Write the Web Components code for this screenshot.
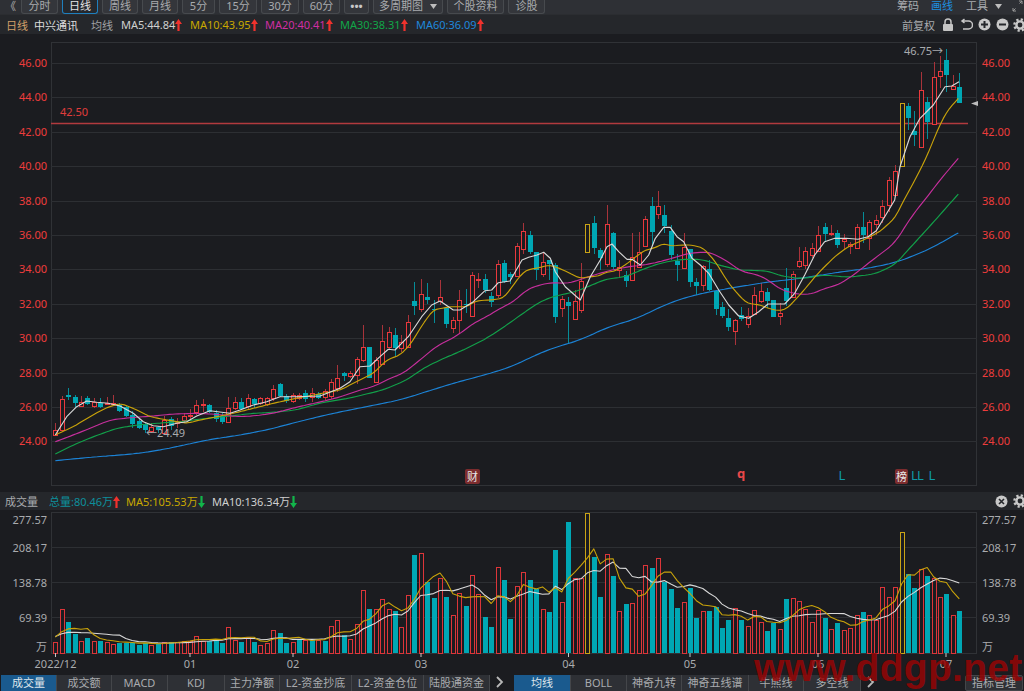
<!DOCTYPE html>
<html><head><meta charset="utf-8"><style>
html,body{margin:0;padding:0;background:#1c1d21;overflow:hidden}
body{width:1024px;height:691px;font:11px "Noto Sans","Noto Sans CJK SC",sans-serif;color:#c4c4c4}
</style></head><body>
<app-shell>
<app-toolbar></app-toolbar>
<quote-head></quote-head>
<kline-chart></kline-chart>
<vol-head></vol-head>
<vol-chart></vol-chart>
<tab-bar></tab-bar>
<water-mark>www.ddgp.net</water-mark>
</app-shell>
<script>
const FONT='"Noto Sans","Noto Sans CJK SC",sans-serif';
const X=i=>55.3+6.411*i;
const BG='#1b1c20',RED='#ea383c',TEAL='#00a7b4',YEL='#c9a316';
const UP='<svg width="7" height="12" viewBox="0 0 7 12" style="display:inline-block;vertical-align:-2px"><path d="M3.5 0L7 5H4.6V12H2.4V5H0Z" fill="#f0322d"/></svg>';
const DN='<svg width="7" height="12" viewBox="0 0 7 12" style="display:inline-block;vertical-align:-2px"><path d="M3.5 12L7 7H4.6V0H2.4V7H0Z" fill="#12b54a"/></svg>';
const GEAR=`<svg width="14" height="14" viewBox="0 0 14 14"><circle cx="7" cy="7" r="3.6" fill="none" stroke="#c8c8c8" stroke-width="2.4"/><circle cx="7" cy="7" r="5.6" fill="none" stroke="#c8c8c8" stroke-width="2.4" stroke-dasharray="2.2 2.2"/></svg>`;
const TRI='<svg width="7" height="5" viewBox="0 0 7 5"><path d="M0 0H7L3.5 5Z" fill="#bdbdbd"/></svg>';
const candleData=[
[380,`R 150 165 130 165
R 58 150 47 150
T 45 50 25 60
T 50 68 45 80
R 65 78 48 80
T 55 72 48 75
R 67 80 55 83
T 70 82 55 85
R 68 70 50 75
R 70 72 45 75
T 75 92 68 97
T 82 108 78 112
T 105 132 92 145
T 123 145 118 148
T 133 150 128 158
R 142 153 128 158
T 142 152 138 158
R 120 160 108 165
T 118 140 112 150
R 125 127 115 145
R 107 120 98 130
R 105 107 88 118
R 75 95 60 105
R 73 75 58 95
T 75 95 72 100
T 100 118 90 125
T 108 127 100 132
R 85 126 50 130
R 67 85 50 90
T 65 85 55 90
R 55 80 42 88
T 58 72 55 85
R 55 70 52 75
R 55 72 50 78
R 28 55 15 62
T 12 47 8 50
T 48 62 42 68
R 45 62 38 68
R 45 55 38 60
T 40 58 30 65
R 40 52 25 65
T 42 55 35 58
R 33 52 28 60
R 6 48 -3 58
R -5 24 -45 35`],
[260,`T 338 348 336 362
R 340 350 333 355
R 297 345 290 372
R 260 300 195 305
T 262 355 262 355
R 300 365 290 365
R 242 310 195 310
R 217 262 200 270
T 225 263 205 290
R 245 262 225 275
R 185 260 165 262
T 122 137 67 165
R 102 147 57 155
T 112 122 70 132
T 148 152 120 190
R 112 123 60 135
T 145 193 140 205
R 180 203 170 218
R 119 180 90 218
T 132 135 88 160
R 45 167 35 172
R 58 62 40 85
T 58 92 42 98
T 108 127 95 140
R 12 105 0 115
T 8 65 0 70
T 43 53 35 72`],
[180,`R 197 287 190 290
R 153 208 130 222
T 165 215 153 222
T 217 270 215 300
R 245 281 215 290
T 240 252 240 300
T 255 410 250 428
R 358 386 347 410
T 365 377 350 492
R 362 415 330 420
R 303 390 250 400
Y 131 214 131 214
T 130 204 108 222
T 210 235 205 270
R 133 254 75 262
T 158 260 155 268
R 260 268 240 293
T 285 302 272 320
R 230 299 158 300
R 216 262 157 265
R 118 198 108 200
T 78 155 52 197
R 78 101 33 118
T 105 137 75 158
T 152 223 135 240
T 242 253 222 303
R 202 266 158 268
T 207 305 207 320
T 305 317 295 345
R 259 315 255 333
T 268 332 240 332
T 332 387 330 405
T 380 408 365 413
T 413 441 388 452
R 421 455 418 495
T 405 418 380 423
R 407 430 385 443
R 345 401 322 405
R 333 364 310 368
T 335 362 325 385`],
[200,`T 300 350 300 352
R 340 350 310 375
T 265 303 205 318
R 222 290 212 292
R 184 198 142 203
R 154 196 142 208
R 145 165 130 175
R 106 155 77 157
T 82 104 70 122
R 98 102 75 108
T 100 137 90 144
R 117 123 102 150
R 133 138 125 162
R 82 145 72 145
T 82 106 35 130
R 65 112 60 150
R 60 73 45 105
R 17 50 0 70
R -60 15 -69 36`],
[40,`R 392 465 375 470
Y 188 376 188 376
T 197 233 190 270
T 272 284 212 318
R 150 322 97 322
T 185 245 170 298
R 110 250 67 253
R 92 108 48 143
T 61 105 28 155
R 138 147 105 148
T 142 190 100 190`]];
const candles=[];
candleData.forEach(([o,s])=>s.split('\n').forEach(l=>{const p=l.trim().split(' ');candles.push([p[0],...p.slice(1).map(v=>o+v/3)])}));
const MA=[
['#d8d8d8',0,`55.3,435 66.7,416.7 76.7,406.7 86.7,401 96.7,402.3 108.3,403.3 120,406 133.3,413.3 143.3,421.7 153.3,425.7 163.3,426.7 176.7,423.3 186.7,421.7 196.7,416 210,410.7 221.7,412.3 230,413.3 240,410 253.3,405 266.7,401.7 280,396.7 296,396.7 320,396 340,388.3 350,381.7 360,366.7 370,366 380,356.7 388.3,349.3 395,350 408.3,336.7 421.7,316.7 431.7,305 440,301 453.3,310 460,310 473.3,301.7 485,290.7 491.7,290 498.3,282.7 510,281 522,260 528.7,257.3 537,255 543.7,252.3 550.3,258.3 555.3,271.7 565.3,286.7 580.3,300 590.3,276.7 600.3,260 607,246.7 612,244 618.7,251.7 627,259.3 632,259.3 640.3,265 648.7,255 655.3,238.3 663.7,227.3 670.3,227.3 677,236.7 683.7,241.7 692,258.3 700.3,265 708.7,273.3 718.7,290 728.7,305 738.7,316 748.7,318.3 758.7,311.7 768,304 784.7,304 794.7,293.3 804.7,275 814.7,255 824.7,241.7 834.7,238.3 846.3,238.3 858,239.3 868,236.7 876.3,230.7 884.7,216.7 894.7,200 900,166.7 910,136.7 920,118.3 933.3,105 945,86.7 951.7,86 959,81.7`],
['#c9a30a',1,`55.3,435 73.3,426.7 90,416.7 105,408.3 120,403.3 133.3,408.3 150,416.7 166.7,420 186.7,423.3 200,420 216.7,416.7 233.3,413.3 253.3,408.3 273.3,403.3 296,398.3 340,390 350,385 363.3,378.3 373.3,373.3 386.7,360 400,355 410,345 423.3,323.3 433.3,310 450,306.7 466.7,306.7 476.7,300.7 490,300 503.3,298.3 512,287 522,273.3 528.7,269.3 537,268.3 548.7,265 557,267.3 568.7,272.7 580.3,278.3 590.3,276.7 598.7,276 607,271.7 613.7,271.7 625.3,265 633.7,258.3 645.3,250 653.7,248.3 664.3,243.3 670.3,246 682,245 692,245 703.7,248.3 715.3,261.7 728.7,283.3 738.7,295 747,303.3 760.3,305 768,308.3 778,310.7 786.3,309.3 801.3,293.3 818,273.3 834.7,256.7 848,246.7 864.7,239.3 879.7,231.7 894.7,218.3 904,200 915,180 926.7,156.7 938.3,128.3 946.7,111.7 958.3,98.3`],
['#c72f9d',2,`55.3,441.7 73.3,435 90,428.3 110,420 130,417.7 153.3,416 173.3,414 196.7,413.3 216.7,414.3 236.7,416.7 253.3,416 273.3,413.3 296,407.3 320,402 340,397 360,390 373.3,386.7 390,378.3 403.3,373.3 420,360 436.7,346 456.7,336 473.3,323.3 486.7,316.7 500,308.3 512,302.7 528.7,288.3 548.7,282.7 568.7,283.3 588.7,276.7 608.7,270.7 628.7,266.7 648.7,264.3 668.7,259.3 688.7,253.3 708.7,251.7 725.3,260 742,271.7 758.7,275 768,280 781.3,290 798,294.3 811.3,294.3 824.7,288.3 838,285 851.3,276.7 874.7,258.3 894.7,243.3 911.3,216.7 924.7,200 940,180 958.3,158.3`],
['#12a14a',2,`55.3,454 73.3,445 93.3,436.7 116.7,428.3 136.7,425 156.7,423.3 180,421.7 206.7,418.3 230,416 253.3,413.3 273.3,412.3 296,410 320,403 350,398 383,390 406.7,380 423.3,368.3 440,360 463.3,350 486.7,338.3 506.7,325 525.3,311.7 542,300.7 555.3,296 575.3,291.7 592,285 605.3,279.3 625.3,276.7 645.3,268.3 662,262.7 682,259.3 702,259.3 718.7,265 738.7,270 768,271 781.3,276 801.3,278.7 824.7,275 848,277.3 874.7,274 894.7,265 908,250 928,228.3 953,200 958.5,194`],
['#1c83d6',4,`55.3,460.7 90,457.3 133.3,454 156.7,450.7 180,446 206.7,440 240,435 266.7,430 296,422.3 330,414 360,408 400,400 431.7,390 453.3,383.3 486.7,374.3 510,367.3 525.3,360 548.7,349.3 580.3,340 608.7,326.7 635.3,319.3 655.3,309.3 675.3,300.7 698.7,294 728.7,288.3 768,282 801.3,278.3 831.3,273.3 868,268.3 896.3,262.3 913,256 931.3,248.3 958.7,232.7`]];
function smooth(str,w){
 const p=str.split(' ').map(s=>s.split(',').map(Number));
 if(!w)return str;
 const s=[];let j=0;
 for(let x=p[0][0];x<=p[p.length-1][0];x+=3){while(j<p.length-2&&p[j+1][0]<x)j++;const t=(x-p[j][0])/(p[j+1][0]-p[j][0]);s.push(p[j][1]+t*(p[j+1][1]-p[j][1]))}
 return s.map((_,i)=>{const r=Math.min(w,i,s.length-1-i);let a=0;for(let k=-r;k<=r;k++)a+=s[i+k];return (p[0][0]+3*i).toFixed(1)+','+(a/(2*r+1)).toFixed(1)}).join(' ');
}
class AppShell extends HTMLElement{constructor(){super();this.attachShadow({mode:'open'}).innerHTML=`<style>:host{display:flex;flex-direction:column;position:relative;width:1024px;height:691px;overflow:hidden}</style><slot></slot>`}}
class ToolBtn extends HTMLElement{constructor(){super();this.attachShadow({mode:'open'}).innerHTML=`<style>
:host{display:flex;flex:none;align-items:center;justify-content:center;box-sizing:border-box;height:14px;width:var(--w,37px);border:1px solid #474a4e;border-top:none;border-radius:0 0 3px 3px;background:#34363b;color:#a9abae;padding-bottom:1px;white-space:nowrap;line-height:12px}
:host([active]){border-color:#1f7fbd;background:#25282d;color:#e4e4e4}
</style><slot></slot>`}}
class AppToolbar extends HTMLElement{constructor(){super();
const b=[['分时',37],['日线',36,1],['周线',36],['月线',36],['5分',33],['15分',38],['30分',38],['60分',37],['<b style="color:#c8c8c8;letter-spacing:0">•••</b>',25],[`<span style="margin-right:7px">多周期图</span>${TRI}`,70],['个股资料',57],['诊股',37]];
this.attachShadow({mode:'open'}).innerHTML=`<style>
:host{display:flex;flex:none;height:15px;background:#2e3035;align-items:flex-start;box-sizing:border-box;font:11px/12px ${FONT};border-bottom:1px solid #2b2d31}
.bk{width:21px;flex:none;text-align:center;color:#b0b0b0;font-size:11px;box-sizing:border-box}
.btns{display:flex;gap:4px;align-items:flex-start}
.sp{flex:1}.r{display:flex;align-items:center;color:#a9abae;height:12px}
.r span{display:block}.r svg{display:block;flex:none}
</style><div class="bk">《</div><div class="btns">${b.map(x=>`<tool-btn style="--w:${x[1]}px" ${x[2]?'active':''}>${x[0]}</tool-btn>`).join('')}</div><div class="sp"></div>
<div class="r"><span style="margin-right:12px">筹码</span><span style="color:#1e8fe0;margin-right:13px">画线</span><span style="margin-right:7px">工具</span>${TRI.replace('<svg','<svg style="margin-right:10px"')}<svg width="11" height="12" viewBox="0 0 11 12" style="margin-right:1px"><path d="M7 1h3v3M10 1L7.5 3.5M4 11H1V8M1 11l2.5-2.5" fill="none" stroke="#9a9a9a"/></svg></div>`}}
class QuoteHead extends HTMLElement{constructor(){super();
const ma=[['MA5:44.84','#d0d0d0',69],['MA10:43.95','#c9a800',75],['MA20:40.41','#d02ea3',75],['MA30:38.31','#10a648',76],['MA60:36.09','#1f88dc',76]];
this.attachShadow({mode:'open'}).innerHTML=`<style>
:host{display:flex;flex:none;height:19px;background:#25272b;align-items:center;font:11px ${FONT};padding-left:6px;white-space:nowrap}
span{display:block}.m{flex:none}.sp{flex:1}.i{display:block;flex:none}
</style><span style="color:#d2a06a;width:28px">日线</span><span style="color:#dedede;width:57px">中兴通讯</span><span style="color:#a0a2a5;width:30px">均线</span>
${ma.map(m=>`<span class="m" style="color:${m[1]};width:${m[2]}px">${m[0]}${UP}</span>`).join('')}<div class="sp"></div>
<span style="color:#a9abae;margin-right:7px">前复权</span>
<svg class="i" width="12" height="14" viewBox="0 0 12 14" style="margin-right:6px"><path d="M3 6V4a3 3 0 0 1 6 0v2" fill="none" stroke="#c4c4c4" stroke-width="1.5"/><rect x="1" y="6" width="10" height="7" rx="1" fill="#c4c4c4"/></svg>
<svg class="i" width="13" height="13" viewBox="0 0 13 13" style="margin-right:5px"><path d="M3 3h5.5a3.5 3.5 0 0 1 0 8H3M4.5 1L2 3l2.5 2" fill="none" stroke="#c8c8c8" stroke-width="1.5"/></svg>
<svg class="i" width="13" height="13" viewBox="0 0 13 13" style="margin-right:5px"><circle cx="6.5" cy="6.5" r="6" fill="#c8c8c8"/><path d="M3 6.5h7M6.5 3v7" stroke="#25272b" stroke-width="2"/></svg>
<svg class="i" width="13" height="13" viewBox="0 0 13 13" style="margin-right:4px"><circle cx="6.5" cy="6.5" r="6" fill="#c8c8c8"/><path d="M3 6.5h7" stroke="#25272b" stroke-width="2"/></svg>
<div style="margin-right:-3px;display:flex">${GEAR}</div>`}}
class VolHead extends HTMLElement{constructor(){super();
this.attachShadow({mode:'open'}).innerHTML=`<style>
:host{display:flex;flex:none;height:18px;background:#25272b;align-items:center;font:11px ${FONT};padding-left:5px;white-space:nowrap}
span{display:block}.sp{flex:1}.i{display:block;flex:none}
</style><span style="color:#a9abae;width:44px">成交量</span><span style="color:#0d8f9c;width:77px">总量:80.46万${UP}</span><span style="color:#c9a800;width:86px">MA5:105.53万${DN}</span><span style="color:#d0d0d0">MA10:136.34万${DN}</span><div class="sp"></div>
<svg class="i" width="13" height="13" viewBox="0 0 13 13" style="margin-right:5px"><circle cx="6.5" cy="6.5" r="6" fill="#c8c8c8"/><path d="M4 4l5 5M9 4l-5 5" stroke="#25272b" stroke-width="1.6"/></svg>
<div style="margin-right:-3px;display:flex">${GEAR}</div>`}}
class KlineChart extends HTMLElement{constructor(){super();
let g='',tx='';
for(let p=46,k=0;p>=24;p-=2,k++){const y=Math.round(63+k*34.4)+.5;g+=`<path d="M51 ${y}H977" stroke="#2d2f33"/>`;
 const t=p.toFixed(2);tx+=`<text x="47" y="${y+3.5}" text-anchor="end">${t}</text><text x="982" y="${y+3.5}">${t}</text>`}
let c='';
const hy=v=>Math.round(v)+.5;
candles.forEach((d,i)=>{const x=Math.round(X(i))+.5,col=d[0]=='R'?RED:d[0]=='T'?TEAL:YEL,wc=d[0]=='R'?'#a8333a':'#058c98';
 if(d[0]!='Y')c+=`<path d="M${x} ${Math.round(d[3])}V${Math.round(d[4])}" stroke="${wc}"/>`;
 if(d[0]=='T')c+=`<rect x="${x-2.5}" y="${Math.round(d[1])}" width="5" height="${Math.max(Math.round(d[2]-d[1]),1)}" fill="${col}"/>`;
 else c+=`<rect x="${x-2}" y="${hy(d[1])}" width="4" height="${Math.max(Math.round(d[2]-d[1]),1)}" fill="${BG}" stroke="${col}"/>`});
const lines=MA.slice().reverse().map(([col,w,p])=>`<polyline points="${smooth(p,w)}" fill="none" stroke="${col}" stroke-width="1.15" stroke-linejoin="round"/>`).join('');
const badge=(x,w,t)=>`<rect x="${x}" y="469" width="${w}" height="15" rx="2" fill="#7c2c2e"/><text x="${x+w/2}" y="480.5" text-anchor="middle" fill="#e8e8e8">${t}</text>`;
this.attachShadow({mode:'open'}).innerHTML=`<style>:host{display:block;flex:none;height:458px;background:${BG}}svg{display:block;font:11px ${FONT}}</style>
<svg width="1024" height="458" viewBox="0 34 1024 458">
<rect x="0" y="34" width="1024" height="458" fill="${BG}"/>
<rect x="51.5" y="42.5" width="925" height="443" fill="none" stroke="#303236"/>
${g}
<g fill="#ee3c3c">${tx}</g>
<path d="M51 123.5H968" stroke="#b23a3e" stroke-width="1.3"/>
<text x="60" y="116" fill="#e03c3c">42.50</text>
${c}${lines}
<text x="904" y="55" fill="#a9abae">46.75→</text>
<text x="146" y="437" fill="#a9abae">←24.49</text>
<path d="M971 103.5L978 101V106Z" fill="#bdbdbd"/>
${badge(465,15,'财')}
<text x="741" y="478" text-anchor="middle" fill="#e8484a" font-weight="700" font-size="13">q</text>
<text x="842" y="480" text-anchor="middle" fill="#0e9aa8" font-size="13">L</text>
${badge(895,13,'榜')}
<text x="911" y="480" fill="#0e9aa8" font-size="13">L</text><text x="917" y="480" fill="#0e9aa8" font-size="13">L</text>
<text x="932" y="480" text-anchor="middle" fill="#0e9aa8" font-size="13">L</text>
</svg>`}}
const volZ=[395,298,337,372,392,384,392,392,395,403,398,398,398,405,400,405,403,395,395,395,393,392,377,392,393,387,398,350,390,397,380,397,405,398,360,370,400,395,390,390,387,390,392,347,329,375,388,343,239,298,296,266,298,304,352,256,136,129,215,265,205,260,316,250,288,195,253,321,351,172,211,326,
228,187,211,237,296,307,120,275,35,203,203,8,140,260,131,197,302,283,278,239,164,175,143,215,238,293,277,235,323,302,304,292,354,331,293,329,349,301,337,362,340,357,268,263,274,298,335,301,323,357,340,360,355,316,307,316,330,230,260,230,65,192,235,178,197,205,260,252,316,304];
const volT='RRTTRTRTRRTTTTTRTRTRRRRRTTTRRTRTRRRTTRTRTRTRRTRRRTRRRTRRTRTTRTRRTRRTTRTT'+'RRTTRTTRTRRYTTRTRTRRRTRTTTRTTRTTTTRTRRRTTRTRRRRRTRTRRRTRRRRRYTTRTRRTRT';
class VolChart extends HTMLElement{constructor(){super();
const ty=i=>510+i/3;let g='',tx='';
[[547.5,'208.17'],[582.5,'138.78'],[617.5,'69.39']].forEach(([y,t])=>{g+=`<path d="M51 ${y}H977" stroke="#2d2f33"/>`;tx+=`<text x="47" y="${y+4}" text-anchor="end">${t}</text><text x="982" y="${y+4}">${t}</text>`});
tx+=`<text x="47" y="524" text-anchor="end">277.57</text><text x="982" y="524">277.57</text><text x="47" y="651" text-anchor="end">万</text><text x="982" y="651">万</text>`;
let bars='';
volZ.forEach((z,i)=>{const x=Math.round(X(i))+.5,t=volT[i],y=ty(z);
 if(t=='T')bars+=`<rect x="${x-2.5}" y="${Math.round(y)}" width="5" height="${653-Math.round(y)}" fill="${TEAL}"/>`;
 else bars+=`<rect x="${x-2}" y="${Math.round(y)+.5}" width="4" height="${653-Math.round(y)}" fill="${BG}" stroke="${t=='R'?'#dc3539':YEL}"/>`});
const maLine=(n,col)=>{const v=volZ.map(z=>430-z);const pts=v.map((_,i)=>{let s=0;for(let k=0;k<n;k++)s+=i-k>=0?v[i-k]:51;return X(i).toFixed(1)+','+(653-s/n/3).toFixed(1)}).join(' ');
 return `<polyline points="${pts}" fill="none" stroke="${col}" stroke-width="1.1" stroke-linejoin="round"/>`};
const ticks=[[55.5,'2022/12'],[190,'01'],[293,'02'],[421,'03'],[568.5,'04'],[690,'05'],[818,'06'],[946,'07']];
this.attachShadow({mode:'open'}).innerHTML=`<style>:host{display:block;flex:none;height:165px;background:${BG}}svg{display:block;font:11px ${FONT}}</style>
<svg width="1024" height="165" viewBox="0 510 1024 165">
<rect x="0" y="510" width="1024" height="165" fill="${BG}"/>
<rect x="51.5" y="512.5" width="925" height="141" fill="none" stroke="#303236"/>
${g}<g fill="#a9abae">${tx}</g>${bars}${maLine(10,'#d8d8d8')}${maLine(5,'#c9a30a')}
${ticks.map(([x,t])=>`<path d="M${x} 653V657" stroke="#c8c8c8"/><text x="${x}" y="668" fill="#a9abae" text-anchor="middle">${t}</text>`).join('')}
</svg>`}}
class TabItem extends HTMLElement{constructor(){super();this.attachShadow({mode:'open'}).innerHTML=`<style>
:host{display:flex;flex:none;box-sizing:border-box;width:var(--w,56px);height:16px;align-items:center;justify-content:center;background:#2e3035;border-right:1px solid #44464a;color:#a9abae;white-space:nowrap;line-height:14px}
:host([active]){background:#1a5a8e;color:#dfe6ec}
</style><slot></slot>`}}
class TabBar extends HTMLElement{constructor(){super();
const a=[['成交量',56,1],['成交额',55],['MACD',56],['KDJ',57],['主力净额',55],['L2-资金抄底',72],['L2-资金仓位',72],['陆股通资金',66]];
const b=[['均线',57,1],['BOLL',56],['神奇九转',55],['神奇五线谱',67],['牛熊线',55],['多空线',57]];
const t=l=>l.map(x=>`<tab-item style="--w:${x[1]}px" ${x[2]?'active':''}>${x[0]}</tab-item>`).join('');
const chev='<svg width="24" height="14" viewBox="0 0 24 14"><path d="M7 2l5 5-5 5" fill="none" stroke="#b8b8b8" stroke-width="1.8"/></svg>';
this.attachShadow({mode:'open'}).innerHTML=`<style>
:host{display:flex;flex:none;height:16px;background:${BG};font:11px ${FONT};overflow:hidden;padding-left:1px;align-items:flex-start}
.g{display:flex}.sp{flex:1}svg{flex:none;display:block}
.m{border:1px solid #44464a;border-radius:2px;height:16px;width:58px;box-sizing:border-box;background:#2e3035;color:#a9abae;text-align:center;margin-right:1px;line-height:14px}
</style><div class="g">${t(a)}</div>${chev}<div class="g">${t(b)}</div>${chev}<div class="sp"></div><div class="m">指标管理</div>`}}
class WaterMark extends HTMLElement{constructor(){super();this.attachShadow({mode:'open'}).innerHTML=`<style>
:host{position:absolute;left:754px;top:645px;font:700 39px/46px "Liberation Sans",sans-serif;letter-spacing:.3px;color:rgba(150,5,5,.85);white-space:nowrap;pointer-events:none}
</style><slot></slot>`}}
[['app-shell',AppShell],['tool-btn',ToolBtn],['app-toolbar',AppToolbar],['quote-head',QuoteHead],['vol-head',VolHead],['kline-chart',KlineChart],['vol-chart',VolChart],['tab-item',TabItem],['tab-bar',TabBar],['water-mark',WaterMark]].forEach(([n,c])=>customElements.define(n,c));
</script>
</body></html>
